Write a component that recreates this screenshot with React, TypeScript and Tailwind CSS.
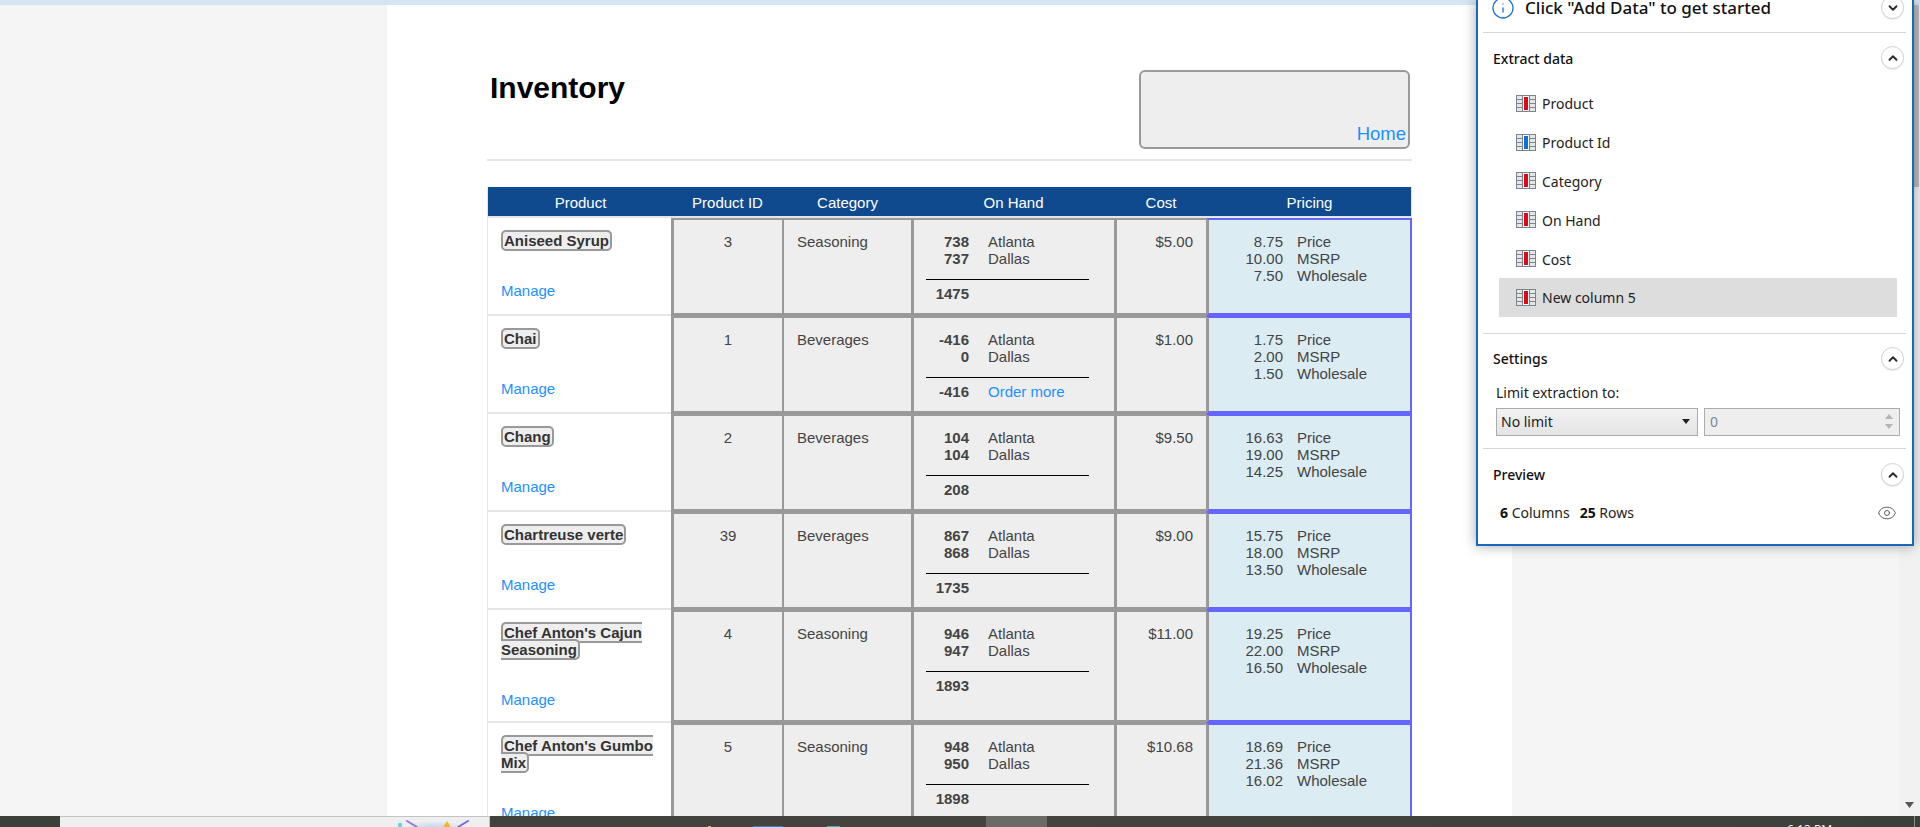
import { ChevronDown, ChevronUp, Eye, Info } from "lucide-react";

const ROWS = [
  { name: "Aniseed Syrup", id: 3, category: "Seasoning", atlanta: "738", dallas: "737", total: "1475", cost: "$5.00", price: "8.75", msrp: "10.00", wholesale: "7.50" },
  { name: "Chai", id: 1, category: "Beverages", atlanta: "-416", dallas: "0", total: "-416", order: true, cost: "$1.00", price: "1.75", msrp: "2.00", wholesale: "1.50" },
  { name: "Chang", id: 2, category: "Beverages", atlanta: "104", dallas: "104", total: "208", cost: "$9.50", price: "16.63", msrp: "19.00", wholesale: "14.25" },
  { name: "Chartreuse verte", id: 39, category: "Beverages", atlanta: "867", dallas: "868", total: "1735", cost: "$9.00", price: "15.75", msrp: "18.00", wholesale: "13.50" },
  { name: "Chef Anton's Cajun Seasoning", id: 4, category: "Seasoning", atlanta: "946", dallas: "947", total: "1893", cost: "$11.00", price: "19.25", msrp: "22.00", wholesale: "16.50" },
  { name: "Chef Anton's Gumbo Mix", id: 5, category: "Seasoning", atlanta: "948", dallas: "950", total: "1898", cost: "$10.68", price: "18.69", msrp: "21.36", wholesale: "16.02" },
];

const COLUMNS = [
  { label: "Product", color: "#e30613" },
  { label: "Product Id", color: "#0f6fde" },
  { label: "Category", color: "#e30613" },
  { label: "On Hand", color: "#e30613" },
  { label: "Cost", color: "#e30613" },
  { label: "New column 5", color: "#e30613" },
];

const GRAY_CELL = "border-t-2 border-b-[3px] border-[#999999] bg-[#eeeeee] align-top pt-[13px]";

function ColumnIcon({ color }: { color: string }) {
  return (
    <svg width="20" height="17" viewBox="0 0 20 17" className="shrink-0">
      <rect x="0" y="0" width="20" height="17" fill="#7c858e" />
      {[1, 5, 9, 13].map((y) => (
        <g key={y}>
          <rect x="1" y={y} width="5" height="3" fill="#e4e6e8" />
          <rect x="14" y={y} width="5" height="3" fill="#e4e6e8" />
        </g>
      ))}
      <rect x="7" y="1" width="6" height="15" fill="#ffffff" />
      <rect x="8" y="2" width="4" height="13" fill={color} />
    </svg>
  );
}

function RoundButton({ open }: { open?: boolean }) {
  return (
    <div className="flex h-[23px] w-[23px] items-center justify-center rounded-full border border-[#d2d2d2] bg-white shadow-[0_1px_1px_rgba(0,0,0,0.08)]">
      {open ? <ChevronUp size={14} strokeWidth={3.2} color="#2b2b2b" /> : <ChevronDown size={14} strokeWidth={3.2} color="#2b2b2b" />}
    </div>
  );
}

function Divider() {
  return <div className="ml-[5px] mr-[6px] h-px bg-[#d6d6d6]" />;
}

function ExtractPanel() {
  return (
    <div className="absolute right-[6px] top-0 z-10 h-[546px] w-[438px] overflow-hidden border-x-2 border-b-2 border-[#1a69b8] bg-white font-['Noto_Sans',sans-serif] text-[14px] leading-[20px] text-[#222222] shadow-[0_0_12px_rgba(0,0,0,0.35)]">
      <div className="-mt-[4px] flex h-[32px] items-start justify-between pl-[13px] pr-[8px]">
        <div className="flex h-[24px] items-center gap-[10px]">
          <Info size={24} strokeWidth={1.3} color="#1b74d8" />
          <span className="text-[17px] font-medium text-[#111111]">Click "Add Data" to get started</span>
        </div>
        <RoundButton />
      </div>
      <div className="mt-[4px]">
        <Divider />
      </div>
      <div className="flex h-[49px] items-center justify-between pl-[15px] pr-[8px]">
        <span className="pt-[2px] font-medium text-[#111111]">Extract data</span>
        <RoundButton open />
      </div>
      <div className="ml-[21px] mr-[15px] mt-[2px] flex flex-col">
        {COLUMNS.map((col, i) => (
          <div key={col.label} className={"flex h-[38.8px] items-center gap-[6px] pl-[17px] " + (i === 5 ? "bg-[#dddddd]" : "")}>
            <ColumnIcon color={col.color} />
            <span className="pt-[2px]">{col.label}</span>
          </div>
        ))}
      </div>
      <div className="mt-[16px]">
        <Divider />
      </div>
      <div className="flex h-[50px] items-center justify-between pl-[15px] pr-[8px]">
        <span className="font-medium text-[#111111]">Settings</span>
        <RoundButton open />
      </div>
      <div className="-mt-[1px] pl-[18px]">Limit extraction to:</div>
      <div className="mt-[5px] flex gap-[6px] pl-[18px] pr-[12px]">
        <div className="flex h-[28px] w-[202px] items-center justify-between border border-[#acacac] bg-gradient-to-b from-[#f2f2f2] to-[#e4e4e4] pl-[4px] pr-[7px]">
          <span className="pt-px">No limit</span>
          <svg width="8" height="5" viewBox="0 0 8 5">
            <path d="M0 0h8L4 5z" fill="#222222" />
          </svg>
        </div>
        <div className="flex h-[28px] w-[196px] items-center justify-between border border-[#acacac] bg-[#eeeeee] pl-[5px] pr-[6px]">
          <span className="pt-px text-[#7a8699]">0</span>
          <div className="flex flex-col gap-[5px]">
            <svg width="8" height="5" viewBox="0 0 8 5">
              <path d="M4 0l4 5H0z" fill="#b5b5b5" />
            </svg>
            <svg width="8" height="5" viewBox="0 0 8 5">
              <path d="M0 0h8L4 5z" fill="#b5b5b5" />
            </svg>
          </div>
        </div>
      </div>
      <div className="mt-[12px]">
        <Divider />
      </div>
      <div className="flex h-[52px] items-center justify-between pl-[15px] pr-[8px]">
        <span className="font-medium text-[#111111]">Preview</span>
        <RoundButton open />
      </div>
      <div className="flex h-[24px] items-center justify-between pl-[22px] pr-[15px]">
        <span>
          <b className="font-bold text-[#111111]">6</b> Columns<span className="ml-[10px]" />
          <b className="font-bold text-[#111111]">25</b> Rows
        </span>
        <Eye size={20} strokeWidth={1.1} color="#555555" />
      </div>
    </div>
  );
}

function InventoryTable() {
  return (
    <table className="w-[925px] table-fixed border-separate border-spacing-0 text-[15px] leading-[17px] text-[#444444]">
      <colgroup>
        <col className="w-[184px]" />
        <col className="w-[111px]" />
        <col className="w-[129px]" />
        <col className="w-[203px]" />
        <col className="w-[92px]" />
        <col className="w-[206px]" />
      </colgroup>
      <thead>
        <tr className="h-[31px]">
          {["Product", "Product ID", "Category", "On Hand", "Cost", "Pricing"].map((h, i) => (
            <th
              key={h}
              className={
                "border-b-2 border-[#e5e5e5] bg-[#104a8e] pl-[2px] pt-px text-center font-normal text-white " +
                (i === 0 ? "border-l " : "") +
                (i === 5 ? "border-r " : "")
              }
            >
              {h}
            </th>
          ))}
        </tr>
      </thead>
      <tbody>
        {ROWS.map((row) => (
          <tr key={row.id} className="h-[98px]">
            <td className="border-b-2 border-l border-[#e5e5e5] pb-[13px] pl-[13px] pr-[14px] pt-[14px] align-top">
              <span className="rounded-[5px] border-2 border-[#999999] bg-[#eeeeee] px-px font-bold text-[#333333]">{row.name}</span>
              <div className="mt-[33px] text-[#1e90ff]">Manage</div>
            </td>
            <td className={GRAY_CELL + " border-l-[3px] text-center"}>{row.id}</td>
            <td className={GRAY_CELL + " border-l-2 pl-[13px]"}>{row.category}</td>
            <td className={GRAY_CELL + " border-l-[3px] pl-[12px]"}>
              <div className="flex w-[163px] flex-col">
                <div className="flex gap-[19px]">
                  <div className="w-[43px] text-right font-bold">
                    <div>{row.atlanta}</div>
                    <div>{row.dallas}</div>
                  </div>
                  <div>
                    <div>Atlanta</div>
                    <div>Dallas</div>
                  </div>
                </div>
                <div className="mt-[12px] h-px bg-black" />
                <div className="mt-[5px] flex gap-[19px]">
                  <div className="w-[43px] text-right font-bold">{row.total}</div>
                  {row.order && <div className="text-[#1e90ff]">Order more</div>}
                </div>
              </div>
            </td>
            <td className={GRAY_CELL + " border-l-[3px] pr-[13px] text-right"}>{row.cost}</td>
            <td className="border-b-[3px] border-l-[3px] border-r-2 border-t-2 border-[#6666ff] border-l-[#999999] bg-[#dcecf3] pt-[13px] align-top">
              <div className="flex gap-[14px]">
                <div className="w-[74px] text-right">
                  <div>{row.price}</div>
                  <div>{row.msrp}</div>
                  <div>{row.wholesale}</div>
                </div>
                <div>
                  <div>Price</div>
                  <div>MSRP</div>
                  <div>Wholesale</div>
                </div>
              </div>
            </td>
          </tr>
        ))}
      </tbody>
    </table>
  );
}

function Taskbar() {
  return (
    <div className="flex h-[11px] shrink-0 overflow-hidden bg-gradient-to-r from-[#3c403b] via-[#45433f] to-[#3c403b]">
      <div className="w-[60px] shrink-0" />
      <div className="flex h-[11px] w-[430px] shrink-0 border-r border-t border-[#c4c4c4] bg-[#efefef] pl-[337px]">
        <svg width="75" height="10" viewBox="0 0 75 10">
          <defs>
            <radialGradient id="glow" cx="0.5" cy="1" r="0.6">
              <stop offset="0" stopColor="#bcd7f5" />
              <stop offset="1" stopColor="#efefef" />
            </radialGradient>
          </defs>
          <rect x="12" y="0" width="50" height="10" fill="url(#glow)" />
          <circle cx="3" cy="8" r="2.2" fill="#5fd6e6" />
          <path d="M10 4l10 6" stroke="#8e7be0" strokeWidth="2" strokeLinecap="round" />
          <path d="M71 4l-10 6" stroke="#7a68e8" strokeWidth="2" strokeLinecap="round" />
          <path d="M50 4l-4 6h8z" fill="#f2b92b" />
        </svg>
      </div>
      <div className="mt-[10px] ml-[218px] h-px w-[3px] shrink-0 bg-[#d8c23a]" />
      <div className="mt-[10px] ml-[42px] h-px w-[30px] shrink-0 bg-[#1b82e0]" />
      <div className="mt-[10px] ml-[44px] h-px w-[13px] shrink-0 bg-[#2fb5c4]" />
      <div className="ml-[146px] h-[11px] w-[61px] shrink-0 bg-[#6a6a66]" />
      <div className="ml-[740px] w-[60px] shrink-0 pt-[6px] font-['Noto_Sans',sans-serif] text-[12px] leading-[16px] whitespace-nowrap text-[#eeeeee]">6:13 PM</div>
      <div className="ml-[67px] h-[11px] w-px shrink-0 bg-[#8a8d88]" />
    </div>
  );
}

export default function App() {
  return (
    <div className="relative flex h-[827px] w-[1920px] flex-col overflow-hidden bg-[#f5f5f5] font-['Liberation_Sans',Arial,sans-serif]">
      <div className="h-[5px] shrink-0 bg-[#d6e5f3]" />
      <div className="flex min-h-0 flex-1">
        <div className="w-[387px] shrink-0" />
        <div className="w-[1125px] shrink-0 overflow-hidden bg-white pl-[100px]">
          <div className="flex h-[154px] w-[925px] items-start justify-between pt-[66px]">
            <h1 className="ml-[3px] text-[30px] leading-[34px] font-bold text-black">Inventory</h1>
            <div className="mr-[2px] -mt-px flex h-[79px] w-[271px] items-end justify-end rounded-[6px] border-2 border-[#999999] bg-[#eeeeee] pr-[2px] pb-[3px]">
              <span className="text-[18.5px] leading-[21px] text-[#1e90ff]">Home</span>
            </div>
          </div>
          <div className="h-[2px] w-[925px] bg-[#e5e5e5]" />
          <div className="mt-[26px]">
            <InventoryTable />
          </div>
        </div>
        <div className="flex-1" />
        <div className="flex w-[21px] shrink-0 flex-col items-end justify-between bg-[#f1f1f1]">
          <div className="mr-px h-[182px] w-[5px] bg-[#bbbbbb]" />
          <svg width="21" height="22" viewBox="0 0 21 22">
            <path d="M6 8h9l-4.5 6z" fill="#555555" />
          </svg>
        </div>
      </div>
      <Taskbar />
      <ExtractPanel />
    </div>
  );
}
